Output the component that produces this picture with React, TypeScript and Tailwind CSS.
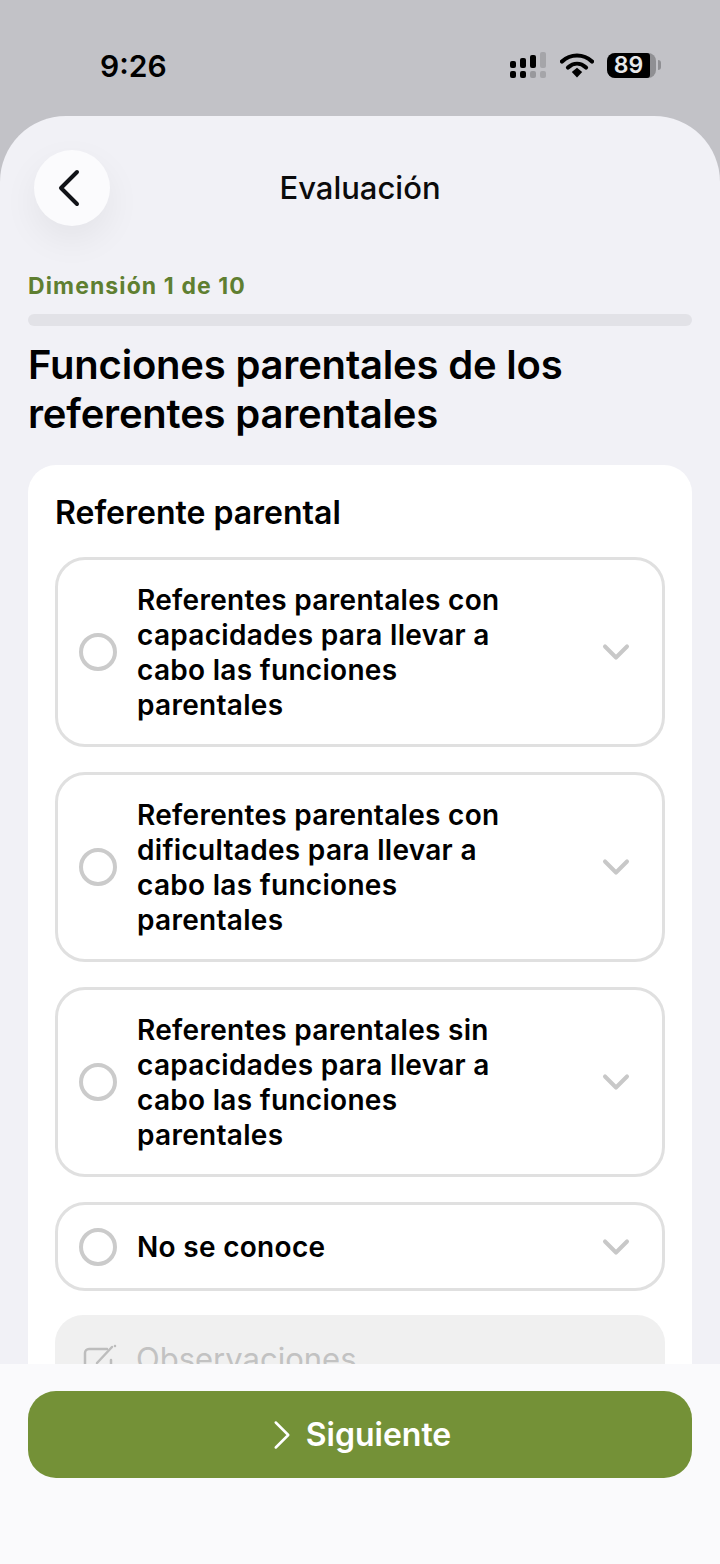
import { ChevronDown, ChevronLeft, ChevronRight } from 'lucide-react';

const options = [
  'Referentes parentales con capacidades para llevar a cabo las funciones parentales',
  'Referentes parentales con dificultades para llevar a cabo las funciones parentales',
  'Referentes parentales sin capacidades para llevar a cabo las funciones parentales',
  'No se conoce',
];

function SignalIcon() {
  return (
    <svg width="38" height="26" viewBox="0 0 38 26">
      <rect x="1" y="9" width="6" height="7" rx="2" fill="#000" />
      <rect x="1" y="19" width="6" height="7" rx="2" fill="#000" />
      <rect x="11" y="6" width="6" height="10" rx="2" fill="#000" />
      <rect x="11" y="19" width="6" height="7" rx="2" fill="#000" />
      <rect x="21" y="3" width="6" height="13" rx="2" fill="#000" />
      <rect x="21" y="19" width="6" height="7" rx="2" fill="#98989c" />
      <rect x="31" y="0" width="6" height="16" rx="2" fill="#a5a5a9" />
      <rect x="31" y="19" width="6" height="7" rx="2" fill="#a5a5a9" />
    </svg>
  );
}

function WifiIcon() {
  return (
    <svg width="34" height="26" viewBox="0 0 34 26">
      <path d="M2 9.5C10.500 1.500 23.500 1.500 32 9.500" fill="none" stroke="#000" strokeWidth="4.200" strokeLinecap="round" />
      <path d="M8 15.500C13.500 10.500 20.500 10.500 26 15.500" fill="none" stroke="#000" strokeWidth="4.200" strokeLinecap="round" />
      <path d="M11.800 20L17 15.800L22.200 20L17 25.500Z" fill="#000" />
    </svg>
  );
}

function BatteryIcon() {
  return (
    <div className="flex items-center gap-[2px]">
      <div className="flex h-[25px] w-[49px] items-center rounded-[8px] bg-[#8f8f93]">
        <div className="flex h-full w-[43px] items-center justify-center rounded-l-[8px] rounded-r-[3px] bg-black">
          <span className="text-[23px] leading-none font-semibold text-[#e8e8ea]">89</span>
        </div>
      </div>
      <div className="h-[10px] w-[3px] rounded-r-full bg-[#8f8f93]" />
    </div>
  );
}

function NoteIcon() {
  return (
    <svg width="36" height="36" viewBox="0 0 36 36" fill="none" stroke="#bdbdbd" strokeWidth="2.500" strokeLinecap="round" className="shrink-0">
      <path d="M24 9H6a4 4 0 0 0-4 4v19a3 3 0 0 0 3 3h20a3 3 0 0 0 3-3V20" />
      <path d="M14 23L29 7" />
      <path d="M32 6v0.100" />
    </svg>
  );
}

function OptionRow({ label }: { label: string }) {
  return (
    <div className="flex min-h-[89px] items-center rounded-[30px] border-[3px] border-[#e0e0e0] bg-white py-[21px] pr-[24px] pl-[21px]">
      <div className="h-[38px] w-[38px] shrink-0 rounded-full border-[4px] border-[#cbcbcb]" />
      <p className="ml-[20px] w-[380px] pt-[2px] text-[28px] leading-[35px] font-semibold tracking-[0.3px] text-black">{label}</p>
      <ChevronDown className="-my-[10px] ml-auto h-[44px] w-[44px] text-[#c8c8c8]" strokeWidth={2.2} />
    </div>
  );
}

export default function App() {
  return (
    <div className="relative h-[1564px] w-[720px] overflow-hidden bg-[#c2c2c7] font-['Inter',sans-serif]">
      {/* Status bar */}
      <div className="flex h-[116px] items-start justify-between pt-[49px] pr-[59px] pl-[100px]">
        <span className="text-[30px] leading-[34px] font-semibold text-black">9:26</span>
        <div className="flex items-center gap-[13px] pt-[3px]">
          <SignalIcon />
          <WifiIcon />
          <BatteryIcon />
        </div>
      </div>

      {/* Sheet */}
      <div className="h-[1448px] rounded-t-[66px] bg-[#f1f1f6] px-[28px] pt-[34px]">
        <div className="relative flex h-[76px] items-center justify-center">
          <button className="absolute top-0 left-[6px] flex h-[76px] w-[76px] items-center justify-center rounded-full bg-[#fbfbfd] shadow-[0_14px_36px_rgba(0,0,0,0.06)]">
            <ChevronLeft className="mr-[6px] h-[64px] w-[64px] shrink-0 text-[#111318]" strokeWidth={1.5} />
          </button>
          <h1 className="text-[31px] leading-[36px] font-medium text-[#0b0b0b]">Evaluación</h1>
        </div>

        <p className="mt-[45px] text-[23px] leading-[30px] font-bold tracking-[1.1px] text-[#5f7f31]">Dimensión 1 de 10</p>
        <div className="mt-[13px] h-[12px] w-full rounded-full bg-[#e2e2e7]" />

        <h2 className="mt-[14px] text-[40px] leading-[49px] font-semibold tracking-[-0.2px] text-black">
          Funciones parentales de los
          <br />
          referentes parentales
        </h2>

        <div className="mt-[27px] rounded-[28px] bg-white px-[27px] pt-[28px] pb-[60px]">
          <h3 className="text-[32px] leading-[40px] font-semibold text-black">Referente parental</h3>
          <div className="mt-[24px] flex flex-col gap-[25px]">
            {options.map((label) => (
              <OptionRow key={label} label={label} />
            ))}
          </div>
          <div className="mt-[24px] flex h-[120px] items-start gap-[17px] rounded-[28px] bg-[#f0f0f0] pt-[25px] pl-[28px]">
            <NoteIcon />
            <span className="text-[31px] leading-[38px] text-[#c2c2c2]">Observaciones</span>
          </div>
        </div>
      </div>

      {/* Footer over the scrolling content */}
      <div className="absolute right-0 bottom-0 left-0 h-[200px] bg-[#fafafc] px-[28px] pt-[27px]">
        <button className="flex h-[87px] w-full items-center justify-center rounded-[28px] bg-[#749137] pr-[12px]">
          <ChevronRight className="-mr-[1px] h-[50px] w-[50px] text-white" strokeWidth={1.2} />
          <span className="text-[32px] leading-[40px] font-semibold text-white">Siguiente</span>
        </button>
      </div>
    </div>
  );
}
